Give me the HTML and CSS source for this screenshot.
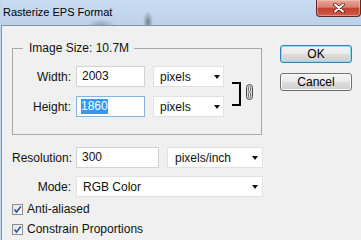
FILE: index.html
```html
<!DOCTYPE html>
<html>
<head>
<meta charset="utf-8">
<link rel="stylesheet" href="styles.css">
</head>
<body>
<div class="window">
  <div class="titlebar">
    <span class="title">Rasterize EPS Format</span>
    <div class="close">
      <svg width="12" height="10" viewBox="0 0 12 10">
        <path d="M2 1.5 L10 8.5 M10 1.5 L2 8.5" stroke="#4a1f1a" stroke-width="3.6" stroke-linecap="round"/>
        <path d="M2 1.5 L10 8.5 M10 1.5 L2 8.5" stroke="#ffffff" stroke-width="2" stroke-linecap="round"/>
      </svg>
    </div>
  </div>
  <div class="client">
    <div class="form">
      <fieldset class="group">
        <legend>Image Size: 10.7M</legend>
        <div class="group-body">
          <div class="rows">
            <div class="row">
              <span class="label">Width:</span>
              <div class="field num">2003</div>
              <div class="select unit"><span>pixels</span><i class="arrow"></i></div>
            </div>
            <div class="row">
              <span class="label">Height:</span>
              <div class="field num focused"><span class="sel">1860</span></div>
              <div class="select unit"><span>pixels</span><i class="arrow"></i></div>
            </div>
          </div>
          <div class="bracket"></div>
          <svg class="link" width="7" height="16" viewBox="0 0 7 16">
            <rect x="0.5" y="0.5" width="6" height="15" rx="3" fill="#d8d8d8" stroke="#4a4a4a"/>
            <rect x="2.5" y="2.5" width="2" height="5" rx="1" fill="#f4f4f4" stroke="#6a6a6a"/>
            <rect x="2.5" y="8.5" width="2" height="5" rx="1" fill="#f4f4f4" stroke="#6a6a6a"/>
          </svg>
        </div>
      </fieldset>
      <div class="row res">
        <span class="label">Resolution:</span>
        <div class="field resnum">300</div>
        <div class="select resunit"><span>pixels/inch</span><i class="arrow"></i></div>
      </div>
      <div class="row mode">
        <span class="label">Mode:</span>
        <div class="select modesel"><span>RGB Color</span><i class="arrow"></i></div>
      </div>
      <div class="check first">
        <span class="box"><svg width="9" height="9" viewBox="0 0 9 9"><path d="M1.5 4.5 L3.5 7 L7.8 1.5" fill="none" stroke="#3b5aa5" stroke-width="1.8"/></svg></span>
        <span>Anti-aliased</span>
      </div>
      <div class="check">
        <span class="box"><svg width="9" height="9" viewBox="0 0 9 9"><path d="M1.5 4.5 L3.5 7 L7.8 1.5" fill="none" stroke="#3b5aa5" stroke-width="1.8"/></svg></span>
        <span>Constrain Proportions</span>
      </div>
    </div>
    <div class="buttons">
      <div class="btn default">OK</div>
      <div class="btn">Cancel</div>
    </div>
  </div>
</div>
</body>
</html>
```
FILE: styles.css
```css
html, body {
  margin: 0;
  padding: 0;
  background: #f0f0f0;
}
body {
  font-family: "Liberation Sans", Arial, sans-serif;
  font-size: 12px;
  color: #111;
}
.window {
  width: 361px;
  height: 240px;
  overflow: hidden;
  border-left: 1px solid #c2d6ea;
  box-sizing: border-box;
  display: flex;
  flex-direction: column;
}
.titlebar {
  height: 25px;
  border-bottom: 1px solid #7f90a4;
  display: flex;
  align-items: flex-start;
  background:
    radial-gradient(ellipse 5px 11px at 147px 22px, rgba(55,62,72,0.55), rgba(55,62,72,0) 100%),
    radial-gradient(ellipse 14px 6px at 100px 25px, rgba(70,80,95,0.35), rgba(70,80,95,0) 100%),
    linear-gradient(#c9dcf0, #bcd2ea);
  flex: none;
}
.title {
  font-size: 11px;
  line-height: 25px;
  padding-left: 2px;
  color: #000;
}
.close {
  margin-left: auto;
  width: 45px;
  height: 17px;
  box-sizing: border-box;
  border: 1px solid #5d2a24;
  border-top: none;
  border-radius: 0 0 4px 4px;
  background: linear-gradient(#e9a799 0%, #d8806f 45%, #c2412f 52%, #d05d48 100%);
  box-shadow: inset 0 0 0 1px rgba(255,210,200,0.45);
  display: flex;
  align-items: center;
  justify-content: center;
}
.client {
  flex: 1;
  display: flex;
  border-left: 1px solid #8595a7;
  padding-left: 10px;
  background: #f0f0f0;
}
.form {
  width: 251px;
  padding-top: 15px;
  display: flex;
  flex-direction: column;
}
.group {
  margin: 0;
  padding: 0 0 17px 0;
  border: 1px solid #a9a9a9;
  width: 250px;
  box-sizing: border-box;
  min-width: 0;
}
.group legend {
  margin-left: 10px;
  padding: 0 5px 0 6px;
  line-height: 14px;
  font-size: 12px;
}
.group-body {
  display: flex;
  align-items: center;
  padding-top: 11px;
}
.rows {
  display: flex;
  flex-direction: column;
  gap: 9px;
}
.row {
  display: flex;
  align-items: center;
  height: 21px;
}
.label {
  width: 59px;
  margin-right: 5px;
  text-align: right;
  flex: none;
}
.group .label {
  width: 58px;
}
.field {
  height: 21px;
  box-sizing: border-box;
  border: 1px solid #d3d3d3;
  background: #fff;
  padding-left: 5px;
  line-height: 19px;
  flex: none;
}
.field.focused {
  border-color: #86b3de;
  padding-left: 4px;
}
.sel {
  display: inline-block;
  background: #3399ff;
  color: #fff;
  line-height: 15px;
  vertical-align: middle;
}
.num { width: 69px; }
.select {
  height: 21px;
  box-sizing: border-box;
  border: 1px solid #e2e2e2;
  background: #fff;
  padding-left: 6px;
  display: flex;
  align-items: center;
  margin-left: 8px;
  flex: none;
}
.arrow {
  margin-left: auto;
  margin-right: 3px;
  width: 0;
  height: 0;
  border-left: 3.5px solid transparent;
  border-right: 3.5px solid transparent;
  border-top: 4px solid #111;
}
.unit { width: 71px; }
.bracket {
  margin-left: 8px;
  margin-top: 4px;
  width: 9px;
  height: 24px;
  box-sizing: border-box;
  border: 2px solid #000;
  border-left: none;
  flex: none;
}
.link {
  margin-left: 5px;
  flex: none;
}
.res { margin-top: 12px; }
.resnum { width: 83px; }
.resunit { width: 96px; padding-left: 7px; }
.resunit .arrow { margin-right: 4px; }
.mode { margin-top: 8px; }
.modesel { width: 187px; margin-left: 0; padding-left: 6px; }
.modesel .arrow { margin-right: 4px; }
.check {
  display: flex;
  align-items: center;
  gap: 4px;
  height: 14px;
  margin-top: 6px;
}
.check.first { margin-top: 5px; }
.box {
  width: 11px;
  height: 11px;
  box-sizing: border-box;
  border: 1px solid #8e8f8f;
  background: linear-gradient(135deg, #e2e2e2, #ffffff);
  display: flex;
  align-items: center;
  justify-content: center;
}
.box svg { display: block; }
.buttons {
  margin-left: 17px;
  padding-top: 19px;
  display: flex;
  flex-direction: column;
  gap: 10px;
}
.btn {
  width: 72px;
  height: 18px;
  box-sizing: border-box;
  border: 1px solid #707070;
  border-radius: 3px;
  background: linear-gradient(#f3f3f3 0%, #ebebeb 48%, #dddddd 52%, #cfcfcf 100%);
  box-shadow: inset 0 0 0 1px #fbfbfb;
  text-align: center;
  line-height: 16px;
  color: #000;
}
.btn.default {
  border-color: #3c7fb1;
  box-shadow: inset 0 0 0 1px #8fdcf5;
}
```
